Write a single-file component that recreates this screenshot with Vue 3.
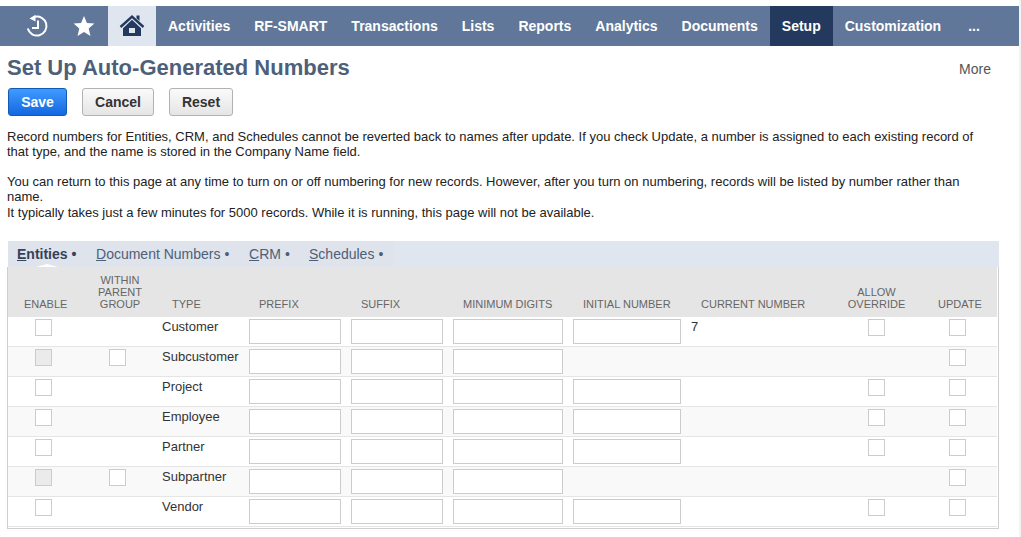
<script setup>
const navItems = ['Activities', 'RF-SMART', 'Transactions', 'Lists', 'Reports', 'Analytics', 'Documents', 'Setup', 'Customization']

const rows = [
  { type: 'Customer', current: '7', within: false, disabled: false, initial: true, override: true },
  { type: 'Subcustomer', current: '', within: true, disabled: true, initial: false, override: false },
  { type: 'Project', current: '', within: false, disabled: false, initial: true, override: true },
  { type: 'Employee', current: '', within: false, disabled: false, initial: true, override: true },
  { type: 'Partner', current: '', within: false, disabled: false, initial: true, override: true },
  { type: 'Subpartner', current: '', within: true, disabled: true, initial: false, override: false },
  { type: 'Vendor', current: '', within: false, disabled: false, initial: true, override: true }
]
</script>

<template>
  <div class="page">
    <nav class="nav">
      <div class="nav__icon nav__icon--history">
        <svg width="24" height="24" viewBox="0 0 24 24" fill="none" stroke="#fff" stroke-width="2">
          <path d="M9.500 2.900A9.500 9.500 0 1 1 2.800 14.500" />
          <path d="M13 6.500V14H7" />
          <path d="M10.500 .8v6.800L4.500 4.500z" fill="#fff" stroke="none" />
        </svg>
      </div>
      <div class="nav__icon nav__icon--star">
        <svg width="24" height="24" viewBox="0 0 24 24" fill="#fff">
          <path d="M12 2l2.900 7 7.500.6-5.700 4.900 1.800 7.400L12 18l-6.500 3.900 1.800-7.400L1.600 9.600 9.100 9z" />
        </svg>
      </div>
      <div class="nav__icon nav__icon--home">
        <svg width="26" height="24" viewBox="0 0 26 24">
          <path d="M1.500 13 13 2.600 24.500 13" fill="none" stroke="#233a5e" stroke-width="2.400" />
          <path d="M17.500 1.500h3v5.500l-3-2.700z" fill="#233a5e" />
          <path
            d="M4 14.300 13 5.800l9 8.500V22H4zM10 14v5h6v-5z"
            fill="#233a5e"
            fill-rule="evenodd"
          />
        </svg>
      </div>
      <a
        v-for="item in navItems"
        :key="item"
        class="nav__item"
        :class="{ 'nav__item--active': item === 'Setup' }"
      >{{ item }}</a>
      <a class="nav__item nav__item--more">...</a>
    </nav>

    <div class="head">
      <h1 class="head__title">Set Up Auto-Generated Numbers</h1>
      <span class="head__more">More</span>
    </div>

    <div class="actions">
      <button class="btn btn--save">Save</button>
      <button class="btn btn--cancel">Cancel</button>
      <button class="btn btn--reset">Reset</button>
    </div>

    <div class="help">
      <p>Record numbers for Entities, CRM, and Schedules cannot be reverted back to names after update. If you check Update, a number is assigned to each existing record of that type, and the name is stored in the Company Name field.</p>
      <p>You can return to this page at any time to turn on or off numbering for new records. However, after you turn on numbering, records will be listed by number rather than name.<br>It typically takes just a few minutes for 5000 records. While it is running, this page will not be available.</p>
    </div>

    <div class="tabs">
      <div class="tabs__list">
        <a class="tab tab--active"><u>E</u>ntities<i>•</i></a>
        <a class="tab tab--doc"><u>D</u>ocument Numbers<i>•</i></a>
        <a class="tab tab--crm"><u>C</u>RM<i>•</i></a>
        <a class="tab tab--sched"><u>S</u>chedules<i>•</i></a>
      </div>
    </div>

    <div class="table">
      <div class="row row--head">
        <div class="th th--enable">ENABLE</div>
        <div class="th th--within">WITHIN PARENT GROUP</div>
        <div class="th th--type">TYPE</div>
        <div class="th th--pad">PREFIX</div>
        <div class="th th--pad">SUFFIX</div>
        <div class="th th--pad">MINIMUM DIGITS</div>
        <div class="th th--pad">INITIAL NUMBER</div>
        <div class="th th--pad">CURRENT NUMBER</div>
        <div class="th th--override">ALLOW OVERRIDE</div>
        <div class="th th--update">UPDATE</div>
      </div>
      <div v-for="row in rows" :key="row.type" class="row row--body">
        <div class="cell cell--enable"><span class="check" :class="{ 'check--disabled': row.disabled }"></span></div>
        <div class="cell cell--within"><span v-if="row.within" class="check"></span></div>
        <div class="cell cell--type">{{ row.type }}</div>
        <div class="cell"><span class="field"></span></div>
        <div class="cell"><span class="field"></span></div>
        <div class="cell"><span class="field field--digits"></span></div>
        <div class="cell"><span v-if="row.initial" class="field field--initial"></span></div>
        <div class="cell cell--current">{{ row.current }}</div>
        <div class="cell cell--override"><span v-if="row.override" class="check"></span></div>
        <div class="cell cell--update"><span class="check"></span></div>
      </div>
    </div>
  </div>
</template>

<style>
html,
body {
  background: #f3f3f3;
  overflow: hidden;
}
</style>

<style scoped>
.page {
  width: 1019px;
  height: 537px;
  background: #fff;
  font-family: "Liberation Sans", Arial, sans-serif;
  padding-top: 6px;
  box-sizing: border-box;
  overflow: hidden;
}

.nav {
  display: flex;
  height: 40px;
  background: #607799;
}

.nav__icon {
  height: 40px;
  display: flex;
  align-items: center;
  justify-content: center;
}

.nav__icon--history {
  width: 60px;
  padding-left: 13px;
  box-sizing: border-box;
}

.nav__icon--star {
  width: 48px;
}

.nav__icon--home {
  width: 48px;
  background: #e0e6ef;
}

.nav__item {
  padding: 0 12px;
  line-height: 40px;
  font-size: 14px;
  font-weight: 700;
  color: #fff;
}

.nav__item--active {
  background: #233a5e;
}

.nav__item--more {
  padding-left: 15px;
}

.head {
  display: flex;
  justify-content: space-between;
  align-items: center;
  height: 42px;
  padding-right: 28px;
}

.head__title {
  margin: 0;
  padding: 2px 0 0 7px;
  font-size: 22px;
  font-weight: 700;
  color: #4d5f79;
}

.head__more {
  margin-top: 4px;
  font-size: 14px;
  color: #555;
}

.actions {
  display: flex;
  height: 28px;
  padding-left: 8px;
}

.btn {
  height: 28px;
  padding: 0;
  border-radius: 3px;
  font-family: inherit;
  font-size: 14px;
  font-weight: 700;
  color: #333;
  border: 1px solid #b2b2b2;
  background: linear-gradient(#fafafa, #e5e5e5);
}

.btn--save {
  width: 59px;
  color: #fff;
  border-color: #125ab2;
  background: linear-gradient(#409bff, #1467e0);
}

.btn--cancel {
  width: 72px;
  margin-left: 15px;
}

.btn--reset {
  width: 64px;
  margin-left: 15px;
}

.help {
  padding: 12.6px 29px 0 7px;
  height: 125px;
  box-sizing: border-box;
  font-size: 13px;
  line-height: 15.5px;
  color: #222;
}

.help p {
  margin: 0 0 14px;
}

.tabs {
  margin-left: 8px;
  width: 991px;
  height: 26px;
  background: #e0e6ef;
}

.tabs__list {
  display: flex;
  width: 385px;
  height: 26px;
  background: #dfe3eb;
}

.tab {
  position: relative;
  box-sizing: border-box;
  padding-left: 9px;
  line-height: 26px;
  font-size: 14px;
  color: #4d5f79;
  white-space: nowrap;
}

.tab i {
  font-style: normal;
  margin-left: 4px;
}

.tab--active {
  width: 79px;
  font-weight: 700;
  color: #34425a;
}

.tab--active::after {
  content: "";
  position: absolute;
  left: 28px;
  bottom: 0;
  border: solid transparent;
  border-width: 0 11px 3px;
  border-bottom-color: #fff;
}

.tab--doc {
  width: 153px;
}

.tab--crm {
  width: 60px;
}

.tab--sched {
  width: 93px;
}

.table {
  margin-left: 7px;
  width: 992px;
  height: 262px;
  box-sizing: border-box;
  border: 1px solid #cfcfcf;
  border-top: 0;
  padding-right: 1px;
  overflow: hidden;
}

.row {
  display: grid;
  grid-template-columns: 90px 54px 97px 102px 102px 120px 118px 149px 73px 85px;
}

.row--head {
  height: 50px;
  background: #e5e5e5;
  align-items: end;
  padding-bottom: 7px;
  box-sizing: border-box;
  font-size: 11px;
  line-height: 12px;
  color: #666;
}

.row--body {
  height: 30px;
  box-sizing: border-box;
  border-bottom: 1px solid #e5e5e5;
  padding-top: 2px;
  font-size: 13px;
  line-height: 15px;
  color: #333;
}

.row--body:nth-child(odd) {
  background: #f9f9f9;
}

.th {
  white-space: nowrap;
}

.th--enable {
  padding-left: 16px;
}

.th--within {
  white-space: normal;
  text-align: center;
  width: 50px;
  margin-left: -3px;
}

.th--type {
  padding-left: 20px;
}

.th--pad {
  padding-left: 10px;
}

.th--override {
  white-space: normal;
  text-align: center;
}

.th--update {
  padding-left: 25px;
}

.check {
  display: block;
  width: 17px;
  height: 17px;
  box-sizing: border-box;
  background: #fff;
  border: 1px solid #ccc;
}

.check--disabled {
  background: #ebebeb;
}

.field {
  display: block;
  width: 92px;
  height: 25px;
  box-sizing: border-box;
  background: #fff;
  border: 1px solid #ccc;
}

.field--digits {
  width: 110px;
}

.field--initial {
  width: 108px;
}

.cell--enable {
  padding-left: 27px;
}

.cell--within {
  padding-left: 11px;
}

.cell--type {
  padding-left: 10px;
}

.cell--override {
  padding-left: 28px;
}

.cell--update {
  padding-left: 36px;
}
</style>
